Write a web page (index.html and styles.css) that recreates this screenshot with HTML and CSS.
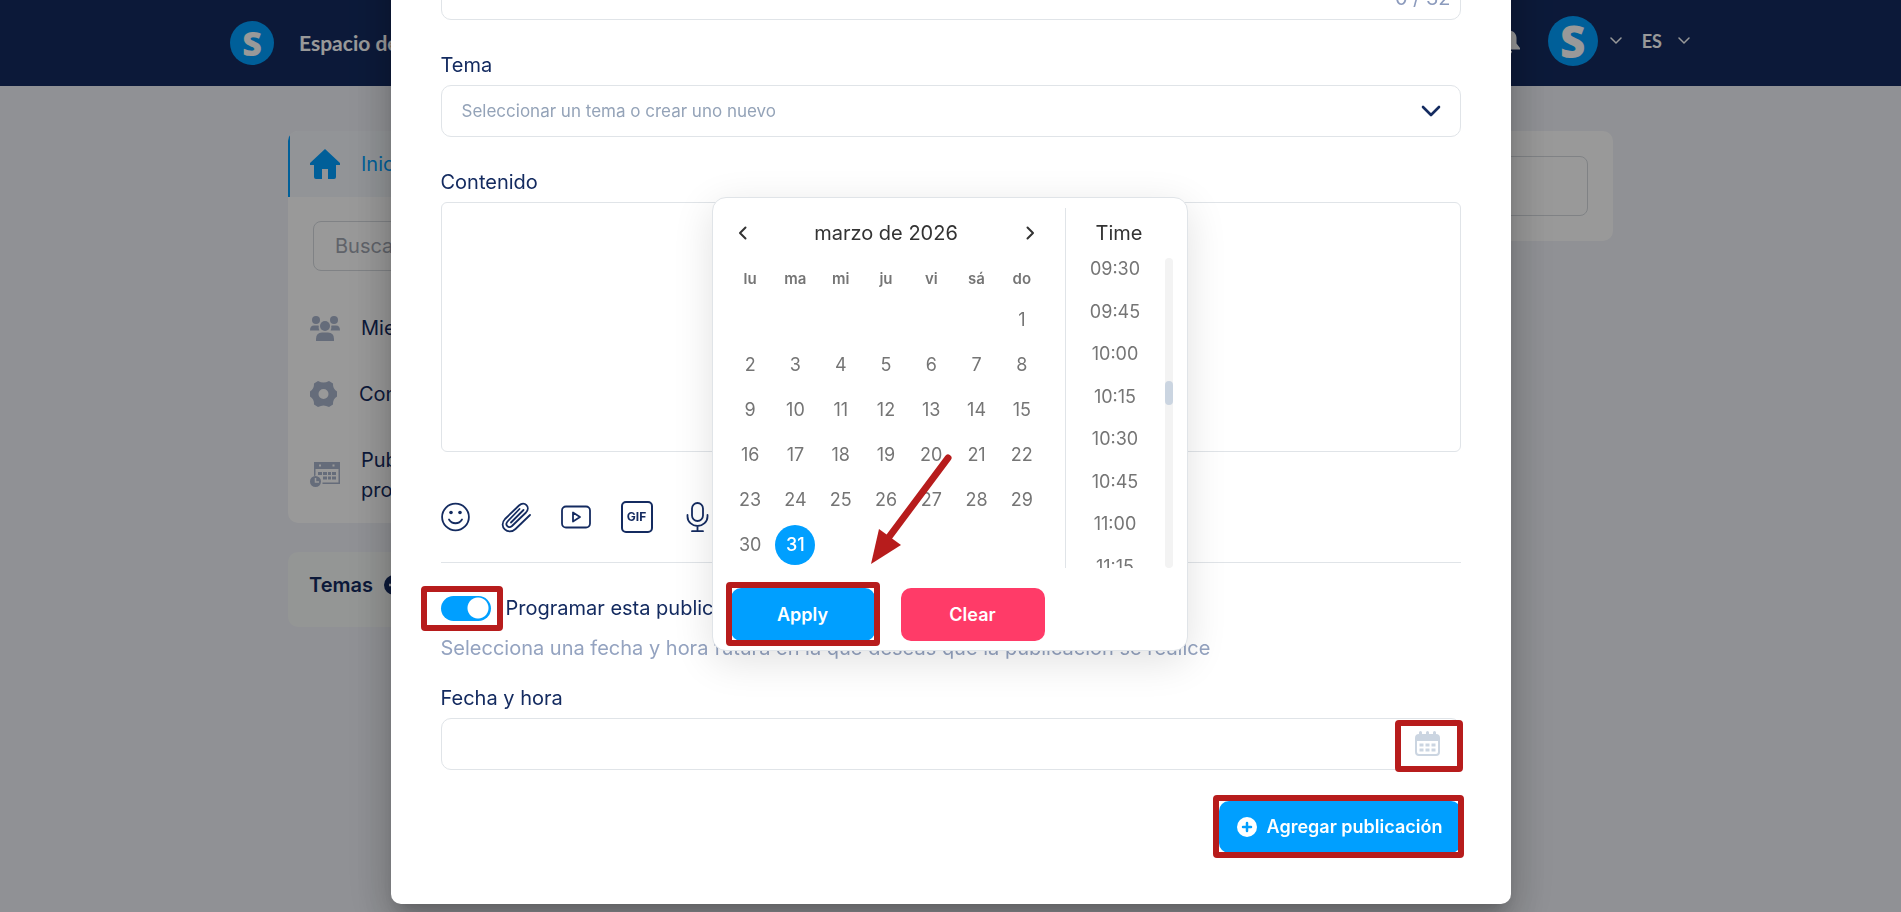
FILE: index.html
```html
<!DOCTYPE html>
<html lang="es">
<head>
<meta charset="utf-8">
<meta name="viewport" content="width=device-width, initial-scale=1">
<title>Programar publicación</title>
<link rel="stylesheet" href="styles.css">
</head>
<body>
<header class="topbar">
  <a class="brand" href="#"><span class="logo">S</span><span class="brand-name">Espacio de trabajo</span></a>
  <div class="topbar-tools">
    <button class="icon-button" aria-label="Notificaciones">
      <svg width="22" height="26" viewBox="0 0 22 26"><path fill="#fff" d="M11 0a2 2 0 0 0-2 2v.7C5.600 3.500 3.500 6.500 3.500 10v5.500L0 20v1.500h22V20l-3.500-4.500V10c0-3.500-2.100-6.500-5.500-7.300V2a2 2 0 0 0-2-2zM8 23a3 3 0 0 0 6 0z"/></svg>
    </button>
    <button class="account" aria-label="Cuenta"><span class="logo logo-large">S</span><svg width="12" height="8" viewBox="0 0 12 8"><path class="line-light" d="M1 1l5 5 5-5"/></svg></button>
    <button class="language">ES<svg width="12" height="8" viewBox="0 0 12 8"><path class="line-light" d="M1 1l5 5 5-5"/></svg></button>
  </div>
</header>

<main class="page">
  <aside class="sidebar">
    <nav class="card menu">
      <a class="menu-item active" href="#">
        <svg width="30" height="30" viewBox="0 0 30 30"><path fill="#009fff" d="M15 0L0 14v2h4v12q0 2 2 2h6v-10h6v10h6q2 0 2-2V16h4v-2z"/></svg>Inicio</a>
      <div class="search"><input class="search-input" type="text" placeholder="Buscar" aria-label="Buscar"></div>
      <a class="menu-item" href="#">
        <svg width="30" height="25" viewBox="0 0 30 25"><g fill="#a9b4cc"><circle cx="6" cy="4" r="4"/><circle cx="24" cy="4" r="4"/><circle cx="15" cy="10" r="5"/><path d="M0 14.500q0-5 4-5h4q.5 0 .8.3-.6 2.500.6 4.700zM30 14.500q0-5-4-5h-4q-.5 0-.8.3.6 2.500-.6 4.700zM6 25v-2q0-6.500 6-6.500h6q6 0 6 6.500v2z"/></g></svg>Miembros</a>
      <a class="menu-item" href="#">
        <svg width="28" height="26" viewBox="0 0 28 26"><path fill="#a9b4cc" fill-rule="evenodd" d="M8 0q3 1.500 5.500 1.500T19 0l4 2.500q-.3 5.500 4 8v5q-4.300 2.500-4 8L19 26q-3-1.500-5.500-1.500T8 26l-4-2.500q.3-5.500-4-8v-5q4.300-2.500 4-8zM13.500 8a5 5 0 1 0 0 10 5 5 0 0 0 0-10z"/></svg>Configuración</a>
      <a class="menu-item" href="#">
        <svg width="30" height="26" viewBox="0 0 30 26"><path fill="#a9b4cc" fill-rule="evenodd" d="M4 0h26v22H12.500v-1.500H28.500V7H5.500v6.500L4 14zM9 2.500v2h2v-2zM22.500 2.500v2h2v-2z"/><path fill="#a9b4cc" d="M8 10h4v3H8zM13 10h4v3h-4zM18 10h3v3h-3zM22 10h4v3h-4zM13 14.500h4v3h-4zM18 14.500h3v3h-3zM22 14.500h4v3h-4z"/><circle cx="5.500" cy="19.500" r="5.500" fill="#a9b4cc"/><path fill="none" stroke="#fff" stroke-width="1.500" d="M5.500 16v4h3.500"/></svg>Publicaciones programadas</a>
    </nav>
    <section class="card topics">
      <h2 class="topics-title">Temas
        <svg width="20" height="20" viewBox="0 0 20 20"><circle cx="10" cy="10" r="10" fill="#142b60"/><path stroke="#fff" stroke-width="2.500" d="M10 5v10M5 10h10"/></svg></h2>
    </section>
  </aside>
  <section class="card composer"><input class="composer-input" type="text" aria-label="Nueva publicación"></section>
</main>

<div class="overlay">
  <form class="modal" role="dialog" aria-label="Agregar publicación">
    <div class="stacked title-field">
      <input class="control" type="text" aria-label="Título">
      <span class="counter">0 / 32</span>
    </div>

    <div class="field">
      <label class="label" for="topic">Tema</label>
      <div class="stacked">
        <select class="control topic-select" id="topic"><option>Seleccionar un tema o crear uno nuevo</option></select>
        <svg class="select-arrow" width="20" height="12" viewBox="0 0 20 12"><path fill="none" stroke="#142b60" stroke-width="2.600" stroke-linecap="round" stroke-linejoin="round" d="M2 2l8 8 8-8"/></svg>
      </div>
    </div>

    <div class="field">
      <label class="label" for="body">Contenido</label>
      <textarea class="control content" id="body"></textarea>
    </div>

    <div class="attachments">
      <button type="button" class="icon-button" aria-label="Emoji"><svg width="30" height="32" viewBox="0 0 30 32"><circle class="line" cx="14.500" cy="16" r="13.400"/><circle cx="10" cy="11.500" r="1.800" fill="#142b60"/><circle cx="19" cy="11.500" r="1.800" fill="#142b60"/><path class="line" d="M8 18.500c3 5 10 5 13 0"/></svg></button>
      <button type="button" class="icon-button" aria-label="Adjuntar archivo"><svg width="30" height="32" viewBox="0 0 30 32"><path class="line" d="M18.500 8L6.500 20.500c-3 3.500 1 7.500 4.500 4.500L25 11.500c5-5.500-1.500-12-7-7L4 18c-7 7.500 3 17 10.500 10L29 14M22.500 9L10 21.500"/></svg></button>
      <button type="button" class="icon-button" aria-label="Video"><svg width="30" height="32" viewBox="0 0 30 32"><rect class="line" x="1" y="5.500" width="28" height="21" rx="4"/><path class="line" d="M12 11.500v9l7-4.500z"/></svg></button>
      <button type="button" class="icon-button gif" aria-label="GIF">GIF</button>
      <button type="button" class="icon-button" aria-label="Audio"><svg width="30" height="32" viewBox="0 0 30 32"><rect class="line" x="9" y="2" width="11" height="18" rx="5.500"/><path class="line" d="M4.500 14v1.500a10 9.500 0 0 0 20 0V14M14.500 25v5M9 30.200h11"/></svg></button>
    </div>

    <div class="schedule-row">
      <span class="marked mark-toggle"><input class="toggle" type="checkbox" id="schedule" checked></span>
      <label class="label" for="schedule">Programar esta publicación</label>
    </div>
    <p class="hint">Selecciona una fecha y hora futura en la que deseas que la publicación se realice</p>

    <div class="date-field">
      <label class="label" for="date">Fecha y hora</label>
      <div class="stacked">
        <input class="control" type="text" id="date">
        <button type="button" class="icon-button calendar-button marked mark-calendar" aria-label="Abrir calendario"><svg width="26" height="26" viewBox="0 0 26 26"><path fill="#cbd5e1" fill-rule="evenodd" d="M4 3V1.500a1.500 1.500 0 0 1 3 0V3h4V1.500a1.500 1.500 0 0 1 3 0V3h4V1.500a1.500 1.500 0 0 1 3 0V3q4 0 4 4v14q0 4-4 4H4q-4 0-4-4V7q0-4 4-4zM2 10v11q0 2 2 2h17q2 0 2-2V10z"/><path fill="#cbd5e1" d="M4.500 12.500h4v3h-4zM10.500 12.500h4v3h-4zM16.500 12.500h4v3h-4zM4.500 17.500h4v3h-4zM10.500 17.500h4v3h-4zM16.500 17.500h4v3h-4z"/></svg></button>
      </div>

      <div class="picker">
        <div class="picker-panes">
          <div class="calendar">
            <div class="month">
              <button type="button" class="icon-button" aria-label="Mes anterior"><svg width="9" height="14" viewBox="0 0 9 14"><path class="line-dark" d="M7.500 1.500L2 7l5.500 5.500"/></svg></button>
              <span>marzo de 2026</span>
              <button type="button" class="icon-button" aria-label="Mes siguiente"><svg width="9" height="14" viewBox="0 0 9 14"><path class="line-dark" d="M1.500 1.500L7 7l-5.500 5.500"/></svg></button>
            </div>
            <table class="days">
              <thead><tr><th>lu</th><th>ma</th><th>mi</th><th>ju</th><th>vi</th><th>sá</th><th>do</th></tr></thead>
              <tbody>
                <tr><td></td><td></td><td></td><td></td><td></td><td></td><td><button type="button" class="day">1</button></td></tr>
                <tr><td><button type="button" class="day">2</button></td><td><button type="button" class="day">3</button></td><td><button type="button" class="day">4</button></td><td><button type="button" class="day">5</button></td><td><button type="button" class="day">6</button></td><td><button type="button" class="day">7</button></td><td><button type="button" class="day">8</button></td></tr>
                <tr><td><button type="button" class="day">9</button></td><td><button type="button" class="day">10</button></td><td><button type="button" class="day">11</button></td><td><button type="button" class="day">12</button></td><td><button type="button" class="day">13</button></td><td><button type="button" class="day">14</button></td><td><button type="button" class="day">15</button></td></tr>
                <tr><td><button type="button" class="day">16</button></td><td><button type="button" class="day">17</button></td><td><button type="button" class="day">18</button></td><td><button type="button" class="day">19</button></td><td><button type="button" class="day">20</button></td><td><button type="button" class="day">21</button></td><td><button type="button" class="day">22</button></td></tr>
                <tr><td><button type="button" class="day">23</button></td><td><button type="button" class="day">24</button></td><td><button type="button" class="day">25</button></td><td><button type="button" class="day">26</button></td><td><button type="button" class="day">27</button></td><td><button type="button" class="day">28</button></td><td><button type="button" class="day">29</button></td></tr>
                <tr><td><button type="button" class="day">30</button></td><td><button type="button" class="day selected">31</button></td><td></td><td></td><td></td><td></td><td></td></tr>
              </tbody>
            </table>
          </div>
          <div class="time">
            <div class="time-title">Time</div>
            <div class="time-scroll">
              <div class="times">
                <button type="button" class="slot">09:30</button>
                <button type="button" class="slot">09:45</button>
                <button type="button" class="slot">10:00</button>
                <button type="button" class="slot">10:15</button>
                <button type="button" class="slot">10:30</button>
                <button type="button" class="slot">10:45</button>
                <button type="button" class="slot">11:00</button>
                <button type="button" class="slot">11:15</button>
              </div>
              <div class="track"><div class="thumb"></div></div>
            </div>
          </div>
        </div>
        <div class="picker-actions">
          <span class="marked mark-apply"><button type="button" class="button">Apply</button></span>
          <button type="button" class="button danger">Clear</button>
        </div>
        <svg class="pointer" width="84" height="112" viewBox="0 0 84 112"><path stroke="#b71c1c" stroke-width="7" stroke-linecap="round" d="M79 5L20 84"/><path fill="#b71c1c" d="M2 111l8-35 22 16z"/></svg>
      </div>
    </div>

    <div class="modal-footer">
      <span class="marked mark-submit"><button type="submit" class="button submit"><svg width="20" height="20" viewBox="0 0 20 20"><circle cx="10" cy="10" r="10" fill="#fff"/><path stroke="#009fff" stroke-width="2.500" stroke-linecap="round" d="M10 6v8M6 10h8"/></svg>Agregar publicación</button></span>
    </div>
  </form>
</div>
</body>
</html>
```
FILE: styles.css
```css
:root {
  --navy: #142b60;
  --blue: #009fff;
  --red: #b71c1c;
  --line: #e0e4e8;
  --muted: #94a3b8;
}

* { box-sizing: border-box; }

body {
  margin: 0;
  min-height: 100vh;
  overflow: hidden;
  background: #f0f2f8;
  color: var(--navy);
  font: 400 20px/30px Inter, "Liberation Sans", sans-serif;
}

button, input, textarea, select { font: inherit; color: inherit; }
button { padding: 0; border: 0; background: none; }
svg { display: block; flex: none; fill: none; }
a { color: inherit; text-decoration: none; }

.line { fill: none; stroke: var(--navy); stroke-width: 1.800; stroke-linecap: round; stroke-linejoin: round; }
.line-light { fill: none; stroke: #fff; stroke-width: 1.500; stroke-linecap: round; }
.line-dark { fill: none; stroke: #333; stroke-width: 2; stroke-linecap: round; stroke-linejoin: round; }

/* Top bar */
.topbar {
  display: flex;
  align-items: center;
  justify-content: space-between;
  height: 86px;
  padding: 0 11.1% 0 12.1%;
  background: #142b60;
  color: #fff;
}
.brand { display: flex; align-items: center; gap: 25px; }
.brand-name { font: 700 21px/30px Lato, sans-serif; }
.logo {
  display: grid;
  place-items: center;
  width: 44px;
  height: 44px;
  border-radius: 50%;
  background: var(--blue);
  color: #fff;
  font: 800 34px/44px "Open Sans", sans-serif;
}
.logo-large { width: 50px; height: 50px; font-size: 44px; line-height: 50px; }
.topbar-tools { display: flex; align-items: center; gap: 20px; padding-bottom: 4px; }
.topbar-tools .icon-button { margin-right: 8px; }
.account { display: flex; align-items: center; gap: 12px; }
.language { display: flex; align-items: center; gap: 16px; font: 700 18px/30px Lato, sans-serif; }

/* Page behind the dialog */
.page {
  display: flex;
  align-items: flex-start;
  justify-content: space-between;
  gap: 30px;
  max-width: 1325px;
  margin: 45px auto 0;
}
.card { border-radius: 10px; background: #fff; overflow: hidden; }
.sidebar { display: flex; flex-direction: column; gap: 29px; width: 300px; }
.menu-item {
  display: flex;
  align-items: center;
  gap: 21px;
  padding: 18px 22px;
}
.menu-item.active { border-left: 2px solid var(--blue); padding-left: 20px; background: #f3f7fc; color: var(--blue); }
.search { padding: 24px 25px; }
.search-input {
  display: block;
  width: 100%;
  height: 50px;
  padding: 0 21px;
  border: 1px solid #d5d9de;
  border-radius: 8px;
}
.search-input::placeholder { color: #a0a5b0; opacity: 1; }
.topics { height: 75px; background: #f7faf8; }
.topics-title { display: flex; align-items: center; gap: 11px; margin: 0; padding: 18px 21px; font-size: 20px; font-weight: 600; line-height: 30px; }
.composer { flex: 1; padding: 25px; }
.composer-input { display: block; width: 100%; height: 60px; border: 1px solid #d5d9de; border-radius: 8px; background: #fff; }

/* Dialog */
.overlay {
  position: fixed;
  inset: 0;
  display: flex;
  align-items: flex-end;
  justify-content: center;
  padding-bottom: 8px;
  background: rgba(0, 0, 0, .4);
}
.modal {
  width: 1120px;
  max-width: 96%;
  padding: 50px 50px 51px;
  border-radius: 10px;
  background: #fff;
  box-shadow: 0 11px 15px -7px rgba(0, 0, 0, .2), 0 24px 38px 3px rgba(0, 0, 0, .14), 0 9px 46px 8px rgba(0, 0, 0, .12);
}
.field { margin-top: 30px; }
.label { display: block; font-size: 20px; line-height: 30px; }
.field .label, .date-field .label { margin-bottom: 5px; }
.control {
  display: block;
  width: 100%;
  height: 52px;
  padding: 0 20px;
  border: 1px solid var(--line);
  border-radius: 10px;
  background: #fff;
  font-size: 17px;
  outline: 0;
}
.stacked { display: grid; align-items: center; }
.stacked > * { grid-area: 1 / 1; }
.counter { justify-self: end; padding: 8px 10px 0; color: #8c9bbd; }
.topic-select { appearance: none; color: var(--muted); }
.select-arrow { justify-self: end; margin-right: 20px; pointer-events: none; }
.content { height: 250px; border-radius: 6px; resize: none; }

.attachments {
  display: flex;
  gap: 30px;
  padding: 49px 0 29px;
  border-bottom: 1px solid var(--line);
}
.gif { width: 32px; height: 32px; border: 2px solid var(--navy); border-radius: 5px; font-size: 12px; font-weight: 700; line-height: 28px; }

.schedule-row { display: flex; align-items: center; gap: 15px; margin-top: 30px; }
.toggle {
  appearance: none;
  display: block;
  width: 50px;
  height: 25px;
  margin: 0;
  border-radius: 13px;
  background: radial-gradient(circle at 37px 12px, #fff 10px, var(--blue) 11px);
}
.hint { margin: 10px 0 20px; color: #94a3c0; }
.date-field { position: relative; }
.calendar-button { justify-self: end; margin-right: 20px; }
.modal-footer { display: flex; justify-content: flex-end; margin-top: 31px; }

.button {
  display: block;
  width: 144px;
  height: 53px;
  border-radius: 10px;
  background: var(--blue);
  color: #fff;
  font-size: 18px;
  font-weight: 600;
}
.danger { background: #ff3b68; }
.submit { display: flex; align-items: center; justify-content: center; gap: 10px; width: 242px; height: 52px; }

/* Date and time picker */
.picker {
  position: absolute;
  bottom: 119px;
  left: 50%;
  width: 476px;
  margin-left: -239px;
  border: 1px solid var(--line);
  border-radius: 14px;
  background: #fff;
  box-shadow: 0 10px 40px rgba(0, 0, 0, .12);
}
.picker-panes { display: flex; padding-top: 10px; }
.calendar { width: 353px; height: 360px; padding: 0 20px 0 15px; border-right: 1px solid var(--line); }
.month { display: flex; align-items: center; justify-content: space-between; height: 50px; padding: 0 10px; color: #333; }
.days { width: 100%; border-collapse: collapse; table-layout: fixed; color: #757575; }
.days th { height: 39px; padding: 2px 0 0; font-size: 15px; font-weight: 600; line-height: 20px; }
.days td { height: 45px; padding: 0; }
.day { display: block; width: 40px; height: 40px; margin: 0 auto; border-radius: 50%; font-size: 18px; }
.selected { background: var(--blue); color: #fff; font-weight: 500; }
.time { flex: 1; padding-right: 14px; }
.time-title { height: 50px; color: #333; line-height: 50px; text-align: center; }
.time-scroll { display: flex; height: 310px; overflow: hidden; }
.times { display: grid; flex: 1; grid-template-rows: repeat(8, 1fr); height: 340px; margin-top: -10px; }
.slot { color: #757575; font-size: 18px; }
.track { width: 8px; padding-top: 123px; border-radius: 4px; background: #f3f3f3; }
.thumb { height: 24px; border-radius: 4px; background: #cbd5e1; }
.picker-actions { display: flex; gap: 26px; padding: 20px 18px 9px; }

/* Highlights drawn over the controls */
.marked { position: relative; }
.marked::after {
  content: "";
  position: absolute;
  border: 6px solid var(--red);
  border-radius: 4px;
  pointer-events: none;
}
.mark-toggle::after { inset: -10px -12px -10px -20px; }
.mark-calendar::after { inset: -11px -22px -15px -20px; }
.mark-apply::after { inset: -6px -5px -5px; }
.mark-submit::after { inset: -6px -3px -5px -6px; }
.pointer { position: absolute; top: 255px; left: 156px; pointer-events: none; }
```
